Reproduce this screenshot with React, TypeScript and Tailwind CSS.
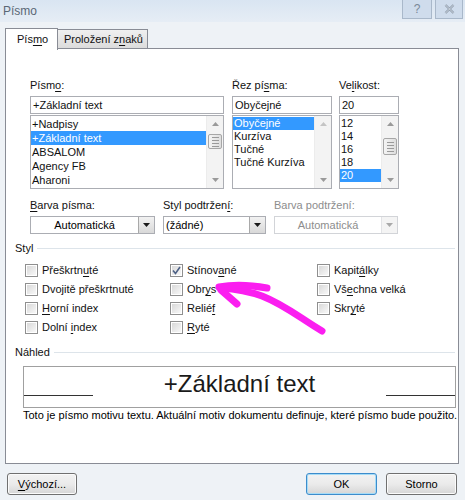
import React from "react";

const U = ({ children }: { children: React.ReactNode }) => (
  <span className="underline decoration-1 underline-offset-[2px]">{children}</span>
);

function UpArrow({ disabled }: { disabled?: boolean }) {
  return (
    <svg width="7" height="4" viewBox="0 0 7 4">
      <path d="M0 4 L3.5 0 L7 4 Z" fill={disabled ? "#c4c4c4" : "#9a9a9a"} />
    </svg>
  );
}
function DownArrow({ disabled }: { disabled?: boolean }) {
  return (
    <svg width="7" height="4" viewBox="0 0 7 4">
      <path d="M0 0 L3.5 4 L7 0 Z" fill={disabled ? "#c4c4c4" : "#9a9a9a"} />
    </svg>
  );
}

function Thumb({ top, h }: { top: string; h: string }) {
  return (
    <div className={`absolute left-[1px] right-[1px] ${top} ${h} border border-[#a7a7a7] rounded-[2px] bg-gradient-to-r from-[#f4f4f4] to-[#dedede] flex flex-col items-center justify-center gap-[2px]`}>
      <div className="w-[7px] h-px bg-[#9a9a9a]" />
      <div className="w-[7px] h-px bg-[#9a9a9a]" />
      <div className="w-[7px] h-px bg-[#9a9a9a]" />
      <div className="w-[7px] h-px bg-[#9a9a9a]" />
    </div>
  );
}

function ScrollBar({ thumb }: { thumb?: React.ReactNode }) {
  return (
    <div className="relative w-[17px] h-full bg-[#f3f3f3] border-l border-[#ececec] flex flex-col items-center justify-between py-[6px]">
      <UpArrow disabled={!thumb} />
      <DownArrow />
      {thumb}
    </div>
  );
}

function Check({ checked }: { checked?: boolean }) {
  return (
    <div className="w-[13px] h-[13px] border border-[#8f8f8f] bg-white p-px shrink-0">
      <div className="w-full h-full bg-gradient-to-br from-[#d9d9d9] to-[#f8f8f8] flex items-center justify-center">
        {checked && (
          <svg width="9" height="9" viewBox="0 0 9 9">
            <path d="M1 4.5 L3.5 7.5 L8 1" stroke="#4d6185" strokeWidth="1.6" fill="none" />
          </svg>
        )}
      </div>
    </div>
  );
}

function CheckRow({ checked, children }: { checked?: boolean; children: React.ReactNode }) {
  return (
    <div className="h-[19px] flex items-center gap-[4px]">
      <Check checked={checked} />
      <span>{children}</span>
    </div>
  );
}

function Combo({ w, text, center, disabled }: { w: string; text: string; center?: boolean; disabled?: boolean }) {
  return (
    <div className={`${w} h-[18px] flex border ${disabled ? "border-[#d2d4d8]" : "border-[#abadb3]"} bg-white`}>
      <div className={`flex-1 flex items-center ${center ? "justify-center" : "pl-[2px]"} ${disabled ? "text-[#8d8d8d]" : "text-black"}`}>
        {text}
      </div>
      <div className={`w-[16px] h-full flex items-center justify-center border-l ${disabled ? "border-[#e2e3e6] bg-[#f4f4f4]" : "border-[#a9a9a9] bg-gradient-to-b from-[#f2f2f2] to-[#d9d9d9]"}`}>
        <svg width="7" height="4" viewBox="0 0 7 4">
          <path d="M0 0 L3.5 4 L7 0 Z" fill={disabled ? "#a9a9a9" : "#1a1a1a"} />
        </svg>
      </div>
    </div>
  );
}

function Button({ w, children, def }: { w: string; children: React.ReactNode; def?: boolean }) {
  return (
    <div
      className={`${w} h-[22px] rounded-[3px] border ${def ? "border-[#3c8ccc] shadow-[inset_0_0_0_1px_#a6dcf7]" : "border-[#707070] shadow-[inset_0_0_0_1px_#fbfbfb]"} bg-gradient-to-b from-[#f2f2f2] via-[#ebebeb] to-[#d6d6d6] flex items-center justify-center text-black`}
    >
      {children}
    </div>
  );
}

export default function App() {
  return (
    <div
      className="relative w-[465px] h-[500px] overflow-hidden bg-[#eef2f6] text-[11px] leading-[13px] text-[#111]"
      style={{ fontFamily: '"Liberation Sans", Arial, sans-serif' }}
    >
      {/* Title bar */}
      <div className="h-[22px] flex items-start bg-gradient-to-b from-[#d9e5f2] to-[#e6edf5]">
        <div className="pl-[3px] pt-[5px] text-[12px] leading-[13px] text-[#5a6775]">Písmo</div>
        <div className="ml-auto flex gap-[3px] pr-[2px]">
          <div className="w-[30px] h-[19px] border border-t-0 border-[#a9b8ca] bg-[#cfdcec] flex items-center justify-center text-[12px] text-[#7a8898]">?</div>
          <div className="w-[28px] h-[19px] border border-t-0 border-[#a9b8ca] bg-[#cfdcec] flex items-center justify-center">
            <svg width="11" height="10" viewBox="0 0 11 10">
              <path d="M1.5 1 L9.5 9 M9.5 1 L1.5 9" stroke="#8896a6" strokeWidth="2.2" />
              <path d="M1.5 1 L9.5 9 M9.5 1 L1.5 9" stroke="#e6ecf3" strokeWidth="0.8" />
            </svg>
          </div>
        </div>
      </div>

      {/* Tabs */}
      <div className="relative h-[27px] px-[5px] pt-[5px] flex items-end z-10">
        <div className="w-[53px] h-[22px] bg-white border border-b-0 border-[#898c95] pl-[11px] pt-[4px] relative top-[1px]">
          Pís<U>m</U>o
        </div>
        <div className="w-[90px] h-[19px] mb-[1px] bg-gradient-to-b from-[#f0f0f0] to-[#dcdcdc] border border-l-0 border-b-0 border-[#898c95] pl-[6px] pt-[3px]">
          Proložení z<U>n</U>aků
        </div>
      </div>

      {/* Panel */}
      <div className="ml-[5px] w-[454px] h-[416px] -mt-[1px] border border-[#898c95] bg-white flex flex-col">
        {/* Row 1 */}
        <div className="flex pl-[24px] pt-[30px]">
          <div className="w-[194px] flex flex-col">
            <div className="h-[13px]">Písm<U>o</U>:</div>
            <div className="mt-[4px] h-[18px] border border-[#abadb3] flex items-center pl-[2px]">+Základní text</div>
            <div className="mt-[1px] h-[74px] border border-[#abadb3] flex">
              <div className="flex-1 pt-px leading-[14px]">
                <div className="h-[14px] pl-[1px]">+Nadpisy</div>
                <div className="h-[14px] pl-[1px] bg-[#3399ff] text-white">+Základní text</div>
                <div className="h-[14px] pl-[1px]">ABSALOM</div>
                <div className="h-[14px] pl-[1px]">Agency FB</div>
                <div className="h-[14px] pl-[1px]">Aharoni</div>
              </div>
              <ScrollBar thumb={<Thumb top="top-[18px]" h="h-[15px]" />} />
            </div>
          </div>
          <div className="w-[100px] ml-[8px] flex flex-col">
            <div className="h-[13px]">Řez pí<U>s</U>ma:</div>
            <div className="mt-[4px] h-[18px] border border-[#abadb3] flex items-center pl-[2px]">Obyčejné</div>
            <div className="mt-[1px] h-[74px] border border-[#abadb3] flex">
              <div className="flex-1 pt-px">
                <div className="h-[13px] pl-[1px] bg-[#3399ff] text-white">Obyčejné</div>
                <div className="h-[13px] pl-[1px]">Kurzíva</div>
                <div className="h-[13px] pl-[1px]">Tučné</div>
                <div className="h-[13px] pl-[1px]">Tučné Kurzíva</div>
              </div>
              <ScrollBar />
            </div>
          </div>
          <div className="w-[60px] ml-[7px] flex flex-col">
            <div className="h-[13px]">Ve<U>l</U>ikost:</div>
            <div className="mt-[4px] h-[18px] border border-[#abadb3] flex items-center pl-[2px]">20</div>
            <div className="mt-[1px] h-[74px] border border-[#abadb3] flex">
              <div className="flex-1 pt-px">
                <div className="h-[13px] pl-[1px]">12</div>
                <div className="h-[13px] pl-[1px]">14</div>
                <div className="h-[13px] pl-[1px]">16</div>
                <div className="h-[13px] pl-[1px]">18</div>
                <div className="h-[13px] pl-[1px] bg-[#3399ff] text-white">20</div>
              </div>
              <ScrollBar thumb={<Thumb top="top-[22px]" h="h-[17px]" />} />
            </div>
          </div>
        </div>

        {/* Row 2 */}
        <div className="flex pl-[24px] mt-[10px]">
          <div className="flex flex-col">
            <div className="h-[13px]"><U>B</U>arva písma:</div>
            <div className="mt-[4px]"><Combo w="w-[125px]" text="Automatická" center /></div>
          </div>
          <div className="flex flex-col ml-[8px]">
            <div className="h-[13px]">Styl podtržen<U>í</U>:</div>
            <div className="mt-[4px]"><Combo w="w-[103px]" text="(žádné)" /></div>
          </div>
          <div className="flex flex-col ml-[8px]">
            <div className="h-[13px] text-[#8d8d8d]">Barva podtržení:</div>
            <div className="mt-[4px]"><Combo w="w-[124px]" text="Automatická" center disabled /></div>
          </div>
        </div>

        {/* Styl */}
        <div className="mt-[8px] pl-[9px] pr-[3px] flex items-center gap-[4px]">
          <span>Styl</span>
          <div className="flex-1 h-px bg-[#dde4ea]" />
        </div>
        <div className="mt-[6px] pl-[19px] grid grid-cols-[145px_147px_1fr]">
          <div className="flex flex-col">
            <CheckRow>Přeškrtn<U>u</U>té</CheckRow>
            <CheckRow>Dvojitě přeškrtnuté</CheckRow>
            <CheckRow><U>H</U>orní index</CheckRow>
            <CheckRow>Dolní <U>i</U>ndex</CheckRow>
          </div>
          <div className="flex flex-col">
            <CheckRow checked>Stínov<U>a</U>né</CheckRow>
            <CheckRow>Obr<U>y</U>s</CheckRow>
            <CheckRow>Relié<U>f</U></CheckRow>
            <CheckRow><U>R</U>yté</CheckRow>
          </div>
          <div className="flex flex-col">
            <CheckRow>Kapit<U>á</U>lky</CheckRow>
            <CheckRow>Vš<U>e</U>chna velká</CheckRow>
            <CheckRow>Skr<U>y</U>té</CheckRow>
          </div>
        </div>

        {/* Náhled */}
        <div className="mt-[9px] pl-[9px] pr-[3px] flex items-center gap-[4px]">
          <span>Náhled</span>
          <div className="flex-1 h-px bg-[#dde4ea]" />
        </div>
        <div className="mt-[7px] ml-[17px] w-[433px] h-[42px] border border-[#a0a0a0] flex items-end pb-[10px]">
          <div className="w-[69px] h-px bg-[#333] mb-[1px]" />
          <div className="flex-1 text-center text-[24px] leading-[26px] text-[#1a1a1a]">+Základní text</div>
          <div className="w-[69px] h-px bg-[#333] mb-[1px]" />
        </div>
        <div className="mt-[1px] ml-[17px] text-[11px] leading-[13px] whitespace-nowrap text-black">
          Toto je písmo motivu textu. Aktuální motiv dokumentu definuje, které písmo bude použito.
        </div>
      </div>

      {/* Buttons */}
      <div className="mt-[9px] px-[7px] flex">
        <Button w="w-[70px]"><span><U>V</U>ýchozí...</span></Button>
        <div className="ml-auto flex gap-[9px] pr-[1px]">
          <Button w="w-[71px]" def>OK</Button>
          <Button w="w-[71px]">Storno</Button>
        </div>
      </div>

      {/* Magenta arrow annotation */}
      <svg className="absolute left-0 top-0 pointer-events-none" width="465" height="500" viewBox="0 0 465 500">
        <g stroke="#fb1ef0" strokeWidth="7" strokeLinecap="round" strokeLinejoin="round" fill="none">
          <path d="M322 331 C 300 318, 285 305, 262 296 C 248 291, 235 289, 221 288" />
          <path d="M219 287 Q 240 283 267 288" />
          <path d="M221 290 L 237 304" />
        </g>
      </svg>
    </div>
  );
}
